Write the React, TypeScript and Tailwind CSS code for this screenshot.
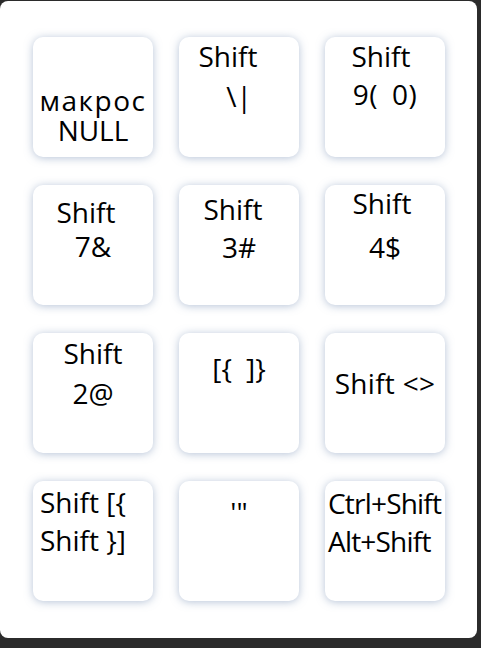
const font = { fontFamily: '"Open Sans", "Noto Sans", "Liberation Sans", sans-serif' }

interface KeyLine {
  parts: string[]
  extra?: string
}

interface KeyCard {
  id: string
  lines: KeyLine[]
  pad: string
  gap: string
  align?: 'center' | 'left'
}

// parts joined by a widened space
const cards: KeyCard[] = [
  { id: 'k1', lines: [{ parts: ['макрос'], extra: 'tracking-[1.5px] leading-[28px]' }, { parts: ['NULL'], extra: 'leading-[28px]' }], pad: 'pt-[48px]', gap: 'gap-0' },
  { id: 'k2', lines: [{ parts: ['Shift'], extra: '-translate-x-[11px]' }, { parts: ['\\|'] }], pad: 'pt-[4px]', gap: 'gap-[10px]' },
  { id: 'k3', lines: [{ parts: ['Shift'], extra: '-translate-x-[4px]' }, { parts: ['9(', '0)'], extra: 'tracking-[0.5px]' }], pad: 'pt-[4px]', gap: 'gap-[8px]' },
  { id: 'k4', lines: [{ parts: ['Shift'], extra: '-translate-x-[7px]' }, { parts: ['7&'] }], pad: 'pt-[12px]', gap: 'gap-[4px]' },
  { id: 'k5', lines: [{ parts: ['Shift'], extra: '-translate-x-[6px]' }, { parts: ['3#'] }], pad: 'pt-[9px]', gap: 'gap-[8px]' },
  { id: 'k6', lines: [{ parts: ['Shift'], extra: '-translate-x-[3px]' }, { parts: ['4$'] }], pad: 'pt-[3px]', gap: 'gap-[14px]' },
  { id: 'k7', lines: [{ parts: ['Shift'] }, { parts: ['2@'] }], pad: 'pt-[5px]', gap: 'gap-[10px]' },
  { id: 'k8', lines: [{ parts: ['[{', ']}'] }], pad: 'pt-[20px]', gap: 'gap-0' },
  { id: 'k9', lines: [{ parts: ['Shift <>'], extra: 'tracking-[0.3px]' }], pad: 'pt-[35px]', gap: 'gap-0' },
  { id: 'k10', lines: [{ parts: ['Shift [{'] }, { parts: ['Shift }]'] }], pad: 'pt-[6px] pl-[7px]', gap: 'gap-[8px]', align: 'left' },
  { id: 'k11', lines: [{ parts: ['\'"'] }], pad: 'pt-[16px]', gap: 'gap-0' },
  { id: 'k12', lines: [{ parts: ['Ctrl+Shift'], extra: '-tracking-[0.8px]' }, { parts: ['Alt+Shift'], extra: '-tracking-[0.8px]' }], pad: 'pt-[7px] pl-[3px]', gap: 'gap-[8px]', align: 'left' },
]

function Key({ card }: { card: KeyCard }) {
  return (
    <div
      className={`
        w-[120px] h-[120px] rounded-[10px] bg-white
        shadow-[0_1px_8px_rgba(110,135,175,0.5)]
        flex flex-col ${card.pad} ${card.gap}
        ${card.align === 'left' ? 'items-start' : 'items-center'}
      `}
    >
      {card.lines.map((line, i) => (
        <div
          key={i}
          className={`text-[28px] leading-[30px] text-black whitespace-nowrap ${line.extra ?? ''}`}
        >
          {line.parts.length === 1 ? (
            line.parts[0]
          ) : (
            <>
              {line.parts[0]}
              <span className="inline-block w-[14px]"> </span>
              {line.parts[1]}
            </>
          )}
        </div>
      ))}
    </div>
  )
}

export default function App() {
  return (
    <div className="w-[481px] h-[648px] bg-[#2b2b2b] pt-px" style={font}>
      <div className="w-[477px] h-[637px] bg-white rounded-[8px] pl-[33px] pt-[36px]">
        <div className="grid grid-cols-[120px_120px_120px] gap-x-[26px] gap-y-[28px]">
          {cards.map((card) => (
            <Key key={card.id} card={card} />
          ))}
        </div>
      </div>
    </div>
  )
}
